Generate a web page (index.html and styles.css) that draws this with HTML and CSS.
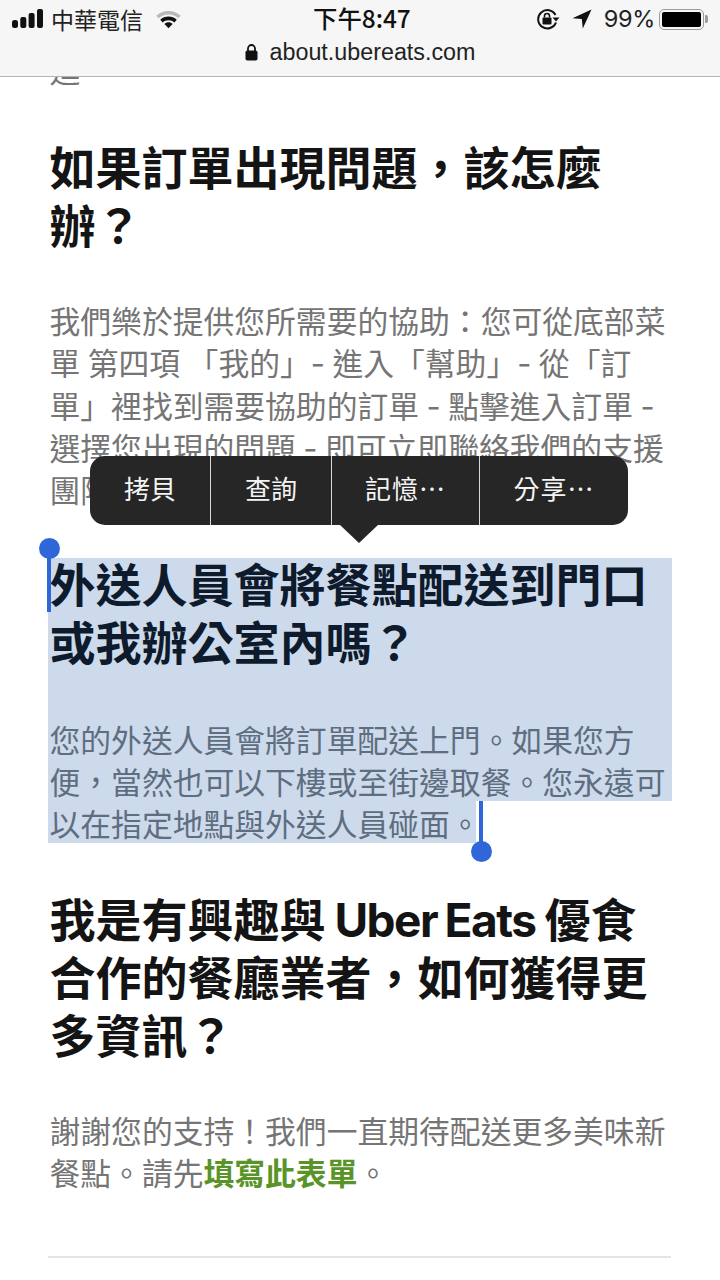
FILE: index.html
```html
<!DOCTYPE html>
<html lang="zh-TW">
<head>
<meta charset="utf-8">
<title>Uber Eats</title>
<link rel="stylesheet" href="styles.css">
</head>
<body>
<div class="page">
  <header class="chrome">
    <div class="status">
      <div class="status-left">
        <svg class="signal" width="32" height="20" viewBox="0 0 32 20"><rect x="0" y="11" width="6" height="8" rx="2.5"/><rect x="8.3" y="8" width="6" height="11" rx="2"/><rect x="16.6" y="4" width="6" height="15" rx="2"/><rect x="25" y="0" width="6" height="19" rx="2"/></svg>
        <span class="carrier">中華電信</span>
        <svg class="wifi" width="27" height="20" viewBox="0 0 27 20"><path d="M13.5 2C8.800 2 4.500 3.800 1.300 6.800l2.300 2.500C6.200 6.900 9.700 5.400 13.500 5.400s7.300 1.500 9.900 3.900l2.300-2.500C22.500 3.800 18.200 2 13.500 2z" fill="#b9b9b9"/><path d="M13.500 7.600c-3.200 0-6.100 1.200-8.300 3.200l2.500 2.700c1.500-1.400 3.600-2.300 5.800-2.300s4.300.9 5.800 2.300l2.500-2.700c-2.200-2-5.100-3.200-8.300-3.200z"/><path d="M13.500 13.300c-1.600 0-3 .6-4.100 1.600l4.100 4.400 4.100-4.400c-1.100-1-2.500-1.600-4.100-1.600z"/></svg>
      </div>
      <span class="time">下午8:47</span>
      <div class="status-right">
        <svg class="rotlock" width="24" height="22" viewBox="0 0 24 22"><path d="M20 14.500A9.200 9.200 0 1 1 19.500 7" fill="none" stroke="#111" stroke-width="2"/><path d="M16.500 9.500h7l-3.500 4z"/><rect x="6.500" y="9.500" width="9" height="7" rx="1"/><path d="M8.500 9.500V8a2.500 2.500 0 0 1 5 0v1.500" fill="none" stroke="#111" stroke-width="1.600"/></svg>
        <svg class="arrow" width="20" height="20" viewBox="0 0 20 20"><path d="M19.500 .5L.5 9.200l9.300 .9 1 9.400z"/></svg>
        <span class="pct">99%</span>
        <div class="battery"><div class="battery-fill"></div></div>
        <div class="battery-cap"></div>
      </div>
    </div>
    <div class="address">
      <svg class="lock" width="13" height="17" viewBox="0 0 13 17"><rect x="0.500" y="6.500" width="12" height="10" rx="1.800"/><path d="M3 7V4.500a3.500 3.500 0 0 1 7 0V7" fill="none" stroke="#111" stroke-width="1.800"/></svg>
      <span>about.ubereats.com</span>
    </div>
  </header>

  <main class="article">
    <p class="body-text">進</p>

    <h2 class="heading">如果訂單出現問題，該怎麼<br>辦？</h2>
    <p class="body-text">我們樂於提供您所需要的協助：您可從底部菜<br>單 第四項 「我的」- 進入「幫助」- 從「訂<br>單」裡找到需要協助的訂單 - 點擊進入訂單 -<br>選擇您出現的問題 - 即可立即聯絡我們的支援<br>團隊。</p>

    <section class="selected">
      <span class="handle handle-start"></span>
      <div class="sel-head">
        <h2 class="heading">外送人員會將餐點配送到門口<br>或我辦公室內嗎？</h2>
      </div>
      <div class="sel-gap"></div>
      <div class="sel-para">
        <p class="body-text sel-text">您的外送人員會將訂單配送上門。如果您方<br>便，當然也可以下樓或至街邊取餐。您永遠可</p>
      </div>
      <div class="sel-para sel-last">
        <p class="body-text sel-text">以在指定地點與外送人員碰面。</p>
        <span class="handle handle-end"></span>
      </div>
    </section>

    <h2 class="heading">我是有興趣與 <span class="latin">Uber Eats</span> 優食<br>合作的餐廳業者，如何獲得更<br>多資訊？</h2>
    <p class="body-text">謝謝您的支持！我們一直期待配送更多美味新<br>餐點。請先<a class="link" href="#">填寫此表單</a>。</p>

    <hr class="rule">
  </main>

  <nav class="menu">
    <div class="menu-bar">
      <span class="menu-item w1">拷貝</span>
      <span class="menu-item w2">查詢</span>
      <span class="menu-item w3 more">記憶⋯</span>
      <span class="menu-item w4 more">分享⋯</span>
    </div>
    <div class="menu-tip"></div>
  </nav>
</div>
</body>
</html>
```

FILE: styles.css
```css
* { box-sizing: border-box; }
html, body { margin: 0; padding: 0; background: #fff; }
body { font-family: "Inter", "Noto Sans CJK TC", sans-serif; }

.page {
  position: relative;
  width: 720px;
  height: 1280px;
  overflow: hidden;
}

/* browser chrome */
.chrome {
  position: relative;
  z-index: 2;
  height: 77px;
  background: #f6f6f6;
  border-bottom: 1px solid #b4b4b4;
  color: #111;
}
.status {
  position: relative;
  height: 38px;
  display: flex;
  justify-content: space-between;
  align-items: center;
  padding: 0 12px 0 12px;
}
.status svg { fill: #111; display: block; }
.status-left, .status-right { display: flex; align-items: center; }
.carrier {
  margin-left: 7px;
  font: 400 23px/1 "Noto Sans CJK TC", sans-serif;
  color: #222;
}
.wifi { margin-left: 12px; }
.time {
  position: absolute;
  left: 313px;
  top: 4px;
  font: 500 24.400px/28px "Noto Sans CJK TC", sans-serif;
  color: #111;
  white-space: nowrap;
}
.rotlock { margin-right: 12px; }
.arrow { margin-right: 12px; }
.pct {
  font: 400 23.500px/1 "Inter", sans-serif;
  letter-spacing: -0.3px;
  color: #222;
  margin-right: 4px;
}
.battery {
  width: 45px;
  height: 21px;
  border: 1.500px solid #9c9c9c;
  border-radius: 5px;
  padding: 2px;
}
.battery-fill { height: 100%; background: #000; border-radius: 2px; }
.battery-cap {
  width: 3px;
  height: 8px;
  margin-left: 1px;
  background: #9c9c9c;
  border-radius: 0 2px 2px 0;
}
.address {
  display: flex;
  justify-content: center;
  align-items: center;
  gap: 12px;
  height: 28px;
  font: 400 23.300px/28px "Liberation Sans", sans-serif;
  color: #222;
}
.lock { fill: #111; display: block; }

/* article */
.article {
  position: relative;
  z-index: 1;
  margin-top: -27px;
  padding: 0 48px 0 49.500px;
}
.heading {
  margin: 0 0 46px;
  font-size: 46px;
  line-height: 58px;
  font-weight: 700;
  color: #141414;
  white-space: nowrap;
  word-spacing: -2px;
}
.latin { letter-spacing: -1.500px; }
.body-text {
  margin: 0 0 47px;
  font-size: 30.800px;
  line-height: 42.200px;
  font-weight: 400;
  color: #757575;
  white-space: nowrap;
  word-spacing: -1.200px;
}
.link { color: #5a9428; font-weight: 700; text-decoration: none; }

/* selection */
.selected { position: relative; margin: -1px 0 48px -1.500px; }
.sel-head, .sel-para, .sel-gap { background: #cddaeb; padding-left: 1.500px; }
.sel-head, .sel-para { display: flow-root; }
.sel-head .heading { margin: -2px 0 2px; color: #0d1b2d; }
.sel-gap { height: 43px; }
.sel-text { margin: 3px 0 -3px; line-height: 42px; color: #5e6e80; }
.sel-last { position: relative; width: 428px; }
.handle { position: absolute; display: block; background: #2f67d8; }
.handle::after {
  content: "";
  position: absolute;
  width: 21px;
  height: 21px;
  border-radius: 50%;
  background: #2f67d8;
}
.handle-start { left: -1px; top: 0; width: 4px; height: 54px; }
.handle-start::after { left: -8px; top: -20px; }
.handle-end { right: -7px; top: 0; width: 4px; height: 42px; }
.handle-end::after { left: -8.500px; top: 40px; }

.rule {
  margin: 60px 1px 0 -1.500px;
  height: 2px;
  border: 0;
  background: #e4e4e4;
}

/* edit menu */
.menu {
  position: absolute;
  z-index: 3;
  left: 90px;
  top: 456px;
  width: 538px;
}
.menu-bar {
  display: flex;
  height: 69px;
  background: #262626;
  border-radius: 15px;
  overflow: hidden;
}
.menu-item {
  display: flex;
  align-items: center;
  justify-content: center;
  padding-bottom: 7px;
  font-family: "Noto Sans CJK TC", sans-serif;
  font-size: 26px;
  color: #f4f4f4;
  border-left: 1px solid #d9d9d9;
}
.menu-item.more { letter-spacing: 1px; }
.menu-item.w1 { width: 120px; border-left: 0; }
.menu-item.w2 { width: 121px; }
.menu-item.w3 { width: 148px; }
.menu-item.w4 { width: 149px; }
.menu-tip {
  width: 0;
  height: 0;
  margin-left: 250px;
  border-left: 19px solid transparent;
  border-right: 19px solid transparent;
  border-top: 18px solid #262626;
}
```
